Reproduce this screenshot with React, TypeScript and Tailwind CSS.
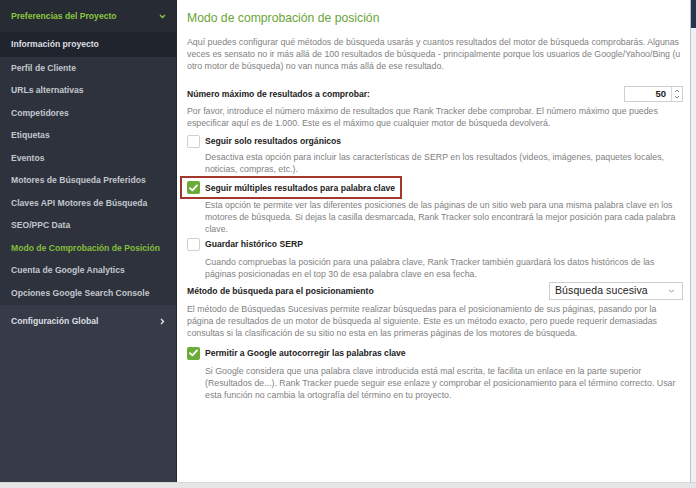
import React from "react";

const font = { fontFamily: '"Liberation Sans", Arial, sans-serif' };

const navItems = [
  "Perfil de Cliente",
  "URLs alternativas",
  "Competidores",
  "Etiquetas",
  "Eventos",
  "Motores de Búsqueda Preferidos",
  "Claves API Motores de Búsqueda",
  "SEO/PPC Data",
  "Modo de Comprobación de Posición",
  "Cuenta de Google Analytics",
  "Opciones Google Search Console",
];

function Lines({ lines, className = "" }: { lines: string[]; className?: string }) {
  return (
    <div className={"text-[8.8px] leading-[12px] text-[#7f7f7f] " + className}>
      {lines.map((l, i) => (
        <div key={i} className="whitespace-nowrap">
          {l}
        </div>
      ))}
    </div>
  );
}

function Check({ checked }: { checked: boolean }) {
  if (checked) {
    return (
      <div className="w-[13px] h-[13px] rounded-[2px] bg-[#6aab3a] flex items-center justify-center shrink-0">
        <svg width="9" height="8" viewBox="0 0 9 8">
          <path d="M1 4.2 L3.4 6.4 L8 1.4" stroke="#fff" strokeWidth="1.8" fill="none" strokeLinecap="round" strokeLinejoin="round" />
        </svg>
      </div>
    );
  }
  return <div className="w-[13px] h-[13px] rounded-[2px] border border-[#cfcfcf] bg-white shrink-0" />;
}

function Label({ children }: { children: React.ReactNode }) {
  return <div className="text-[8.6px] leading-[12px] font-bold text-[#222] whitespace-nowrap">{children}</div>;
}

export default function App() {
  return (
    <div style={font} className="w-[696px] h-[488px] flex flex-col overflow-hidden bg-white">
      <div className="flex flex-1 min-h-0">
        {/* Sidebar */}
        <aside className="w-[177px] shrink-0 bg-[#363b47] flex flex-col border-r border-[#22262e]">
          <div className="h-[32px] bg-[#262b34] flex items-center justify-between pl-[11px] pr-[10px]">
            <span className="text-[8.6px] font-bold text-[#8cc63f]">Preferencias del Proyecto</span>
            <svg width="7" height="5" viewBox="0 0 7 5">
              <path d="M1 1 L3.5 3.5 L6 1" stroke="#8cc63f" strokeWidth="1.4" fill="none" />
            </svg>
          </div>
          <div className="h-[25px] bg-[#20242c] flex items-center pl-[11px]">
            <span className="text-[8.6px] font-bold text-[#dcdfe4]">Información proyecto</span>
          </div>
          <div className="bg-[#2d323c]">
            {navItems.map((item) => (
              <div key={item} className="h-[22.5px] flex items-center pl-[11px]">
                <span
                  className={
                    "text-[8.6px] font-bold whitespace-nowrap " +
                    (item === "Modo de Comprobación de Posición" ? "text-[#86bd3c]" : "text-[#c3c7ce]")
                  }
                >
                  {item}
                </span>
              </div>
            ))}
          </div>
          <div className="h-[34px] flex items-center justify-between pl-[11px] pr-[11px]">
            <span className="text-[8.6px] font-bold text-[#dcdfe4]">Configuración Global</span>
            <svg width="5" height="7" viewBox="0 0 5 7">
              <path d="M1 1 L3.5 3.5 L1 6" stroke="#e6e8ec" strokeWidth="1.4" fill="none" />
            </svg>
          </div>
        </aside>

        {/* Main panel */}
        <main className="flex-1 min-w-0 pl-[10px] pt-[8px]">
          <h1 className="text-[12.2px] leading-[20px] text-[#6aa536] whitespace-nowrap">Modo de comprobación de posición</h1>

          <Lines
            className="mt-[8px]"
            lines={[
              "Aquí puedes configurar qué métodos de búsqueda usarás y cuantos resultados del motor de búsqueda comprobarás. Algunas",
              "veces es sensato no ir más allá de 100 resultados de búsqueda - principalmente porque los usuarios de Google/Yahoo/Bing (u",
              "otro motor de búsqueda) no van nunca más allá de ese resultado.",
            ]}
          />

          <div className="mt-[14px] h-[16px] flex items-center justify-between w-[496px]">
            <Label>Número máximo de resultados a comprobar:</Label>
            <div className="flex h-[16px] w-[59px] border border-[#cfcfcf] bg-white">
              <div className="flex-1 text-right pr-[5px] text-[9.5px] font-bold leading-[14px] text-[#222]">50</div>
              <div className="w-[11px] border-l border-[#d8d8d8] flex flex-col items-center justify-center gap-[2px]">
                <svg width="6" height="4" viewBox="0 0 6 4">
                  <path d="M1 3 L3 1 L5 3" stroke="#8a8a8a" strokeWidth="1" fill="none" />
                </svg>
                <svg width="6" height="4" viewBox="0 0 6 4">
                  <path d="M1 1 L3 3 L5 1" stroke="#8a8a8a" strokeWidth="1" fill="none" />
                </svg>
              </div>
            </div>
          </div>

          <Lines
            className="mt-[3px]"
            lines={[
              "Por favor, introduce el número máximo de resultados que Rank Tracker debe comprobar. El número máximo que puedes",
              "especificar aquí es de 1.000. Este es el máximo que cualquier motor de búsqueda devolverá.",
            ]}
          />

          <div className="mt-[5px] flex items-center gap-[5px] h-[14px]">
            <Check checked={false} />
            <Label>Seguir solo resultados orgánicos</Label>
          </div>
          <Lines
            className="mt-[3px] pl-[18px]"
            lines={[
              "Desactiva esta opción para incluir las características de SERP en los resultados (videos, imágenes, paquetes locales,",
              "noticias, compras, etc.).",
            ]}
          />

          <div className="mt-[1px] ml-[-7px] w-[222px] h-[23px] border-2 border-[#a2372b] flex items-center gap-[5px] pl-[5px]">
            <Check checked={true} />
            <Label>Seguir múltiples resultados para palabra clave</Label>
          </div>
          <Lines
            className="pl-[18px]"
            lines={[
              "Esta opción te permite ver las diferentes posiciones de las páginas de un sitio web para una misma palabra clave en los",
              "motores de búsqueda. Si dejas la casilla desmarcada, Rank Tracker solo encontrará la mejor posición para cada palabra",
              "clave.",
            ]}
          />

          <div className="mt-[2px] flex items-center gap-[5px] h-[14px]">
            <Check checked={false} />
            <Label>Guardar histórico SERP</Label>
          </div>
          <Lines
            className="mt-[5px] pl-[18px]"
            lines={[
              "Cuando compruebas la posición para una palabra clave, Rank Tracker también guardará los datos históricos de las",
              "páginas posicionadas en el top 30 de esa palabra clave en esa fecha.",
            ]}
          />

          <div className="mt-[2px] h-[18px] flex items-center justify-between w-[496px]">
            <Label>Método de búsqueda para el posicionamiento</Label>
            <div className="w-[134px] h-[18px] border border-[#cfcfcf] bg-white flex items-center justify-between pl-[5px] pr-[7px]">
              <span className="text-[10.5px] tracking-[0.1px] text-[#222]">Búsqueda sucesiva</span>
              <svg width="7" height="4" viewBox="0 0 7 4">
                <path d="M1 1 L3.5 3 L6 1" stroke="#9a9a9a" strokeWidth="1" fill="none" />
              </svg>
            </div>
          </div>
          <Lines
            className="mt-[3px]"
            lines={[
              "El método de Búsquedas Sucesivas permite realizar búsquedas para el posicionamiento de sus páginas, pasando por la",
              "página de resultados de un motor de búsqueda al siguiente. Este es un método exacto, pero puede requerir demasiadas",
              "consultas si la clasificación de su sitio no esta en las primeras páginas de los motores de búsqueda.",
            ]}
          />

          <div className="mt-[7px] flex items-center gap-[5px] h-[14px]">
            <Check checked={true} />
            <Label>Permitir a Google autocorregir las palabras clave</Label>
          </div>
          <Lines
            className="mt-[5px] pl-[18px]"
            lines={[
              "Si Google considera que una palabra clave introducida está mal escrita, te facilita un enlace en la parte superior",
              "(Resultados de...). Rank Tracker puede seguir ese enlaze y comprobar el posicionamiento para el término correcto. Usar",
              "esta función no cambia la ortografía del término en tu proyecto.",
            ]}
          />
        </main>

        {/* Window edge */}
        <div className="w-[6px] shrink-0 border-l border-[#b9c5d6] bg-[#eef1f5] flex flex-col">
          <div className="h-[28px] bg-[#27344b]" />
        </div>
      </div>
      <div className="h-[6px] shrink-0 bg-[#e6e6e6] border-t border-[#d6d6d6]" />
    </div>
  );
}
